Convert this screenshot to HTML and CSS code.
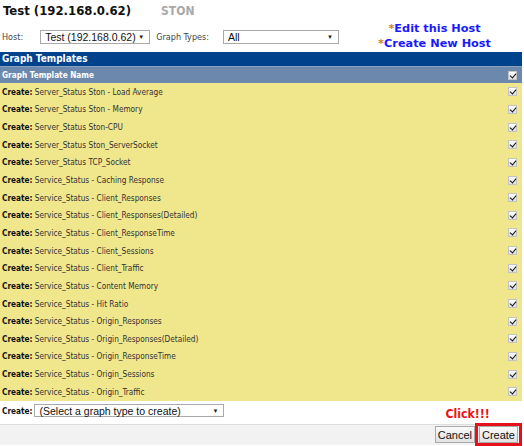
FILE: index.html
```html
<!DOCTYPE html>
<html>
<head>
<meta charset="utf-8">
<link rel="stylesheet" href="styles.css">
</head>
<body>
<div class="top">
  <div class="top-left">
    <div class="title"><span class="host-title">Test (192.168.0.62)</span><span class="ston">STON</span></div>
    <div class="filters">
      <span class="lbl">Host:</span>
      <div class="sel sel-host"><span>Test (192.168.0.62)</span><span class="arr">▼</span></div>
      <span class="lbl lbl-gt">Graph Types:</span>
      <div class="sel sel-gt"><span>All</span><span class="arr">▼</span></div>
    </div>
  </div>
  <div class="links">
    <a class="lnk"><span class="star">*</span>Edit this Host</a>
    <a class="lnk"><span class="star">*</span>Create New Host</a>
  </div>
</div>

<div class="table">
  <div class="thead">Graph Templates</div>
  <div class="subhead"><span>Graph Template Name</span><span class="cb"></span></div>
  <div class="rows" id="rows"></div>
</div>

<div class="create-row">
  <span class="create-lbl">Create:</span>
  <div class="sel sel-create"><span>(Select a graph type to create)</span><span class="arr">▼</span></div>
  <span class="click">Click!!!</span>
</div>

<div class="btnbar">
  <button class="btn">Cancel</button>
  <span class="hl"><button class="btn">Create</button></span>
</div>

<script>
var names = [
 "Server_Status Ston - Load Average",
 "Server_Status Ston - Memory",
 "Server_Status Ston-CPU",
 "Server_Status Ston_ServerSocket",
 "Server_Status TCP_Socket",
 "Service_Status - Caching Response",
 "Service_Status - Client_Responses",
 "Service_Status - Client_Responses(Detailed)",
 "Service_Status - Client_ResponseTime",
 "Service_Status - Client_Sessions",
 "Service_Status - Client_Traffic",
 "Service_Status - Content Memory",
 "Service_Status - Hit Ratio",
 "Service_Status - Origin_Responses",
 "Service_Status - Origin_Responses(Detailed)",
 "Service_Status - Origin_ResponseTime",
 "Service_Status - Origin_Sessions",
 "Service_Status - Origin_Traffic"
];
var rows = document.getElementById('rows');
names.forEach(function(n){
  var r = document.createElement('div');
  r.className = 'row';
  r.innerHTML = '<span><b>Create:</b> ' + n + '</span><span class="cb"></span>';
  rows.appendChild(r);
});
</script>
</body>
</html>
```

FILE: styles.css
```css
* { box-sizing: border-box; }
body {
  margin: 0;
  width: 524px;
  height: 446px;
  overflow: hidden;
  background: #fff;
  font-family: "DejaVu Sans Condensed", "DejaVu Sans", Verdana, sans-serif;
  font-size: 8.2px;
  color: #222;
}
.top {
  display: flex;
  justify-content: space-between;
  height: 52px;
}
.top-left { display: flex; flex-direction: column; }
.title {
  display: flex;
  align-items: baseline;
  padding: 3px 0 0 3px;
  height: 28px;
}
.host-title {
  font-weight: bold;
  font-size: 13px;
  color: #111;
}
.ston {
  font-weight: bold;
  font-size: 12px;
  color: #a8a8a8;
  margin-left: 30px;
}
.filters {
  display: flex;
  align-items: center;
  padding-left: 2px;
  height: 17px;
}
.lbl { color: #444; font-size: 9px; }
.lbl-gt { margin-left: 6px; }
.sel {
  display: flex;
  align-items: center;
  justify-content: space-between;
  height: 14px;
  border: 1px solid #aaa;
  background: #fff;
  font-family: "Liberation Sans", Arial, sans-serif;
  font-size: 10.5px;
  color: #111;
  padding: 0 5px 0 4px;
}
.arr { font-size: 6px; color: #222; }
.sel-host { width: 110px; margin-left: 17px; }
.sel-gt { width: 116px; margin-left: 14px; }
.links {
  display: flex;
  flex-direction: column;
  align-items: center;
  padding: 22px 33px 0 0;
}
.lnk {
  color: #1a1aff;
  font-weight: bold;
  font-size: 11.3px;
  line-height: 14.5px;
  font-family: "DejaVu Sans", Verdana, sans-serif;
}
.star { color: #c8823c; }
.table { width: 522px; }
.thead {
  background: #00438c;
  color: #fff;
  font-weight: bold;
  font-size: 10px;
  height: 14px;
  line-height: 14px;
  padding-left: 2px;
}
.subhead {
  background: #6d88ad;
  color: #fff;
  font-weight: bold;
  font-size: 8.2px;
  height: 17px;
  display: flex;
  align-items: center;
  justify-content: space-between;
  padding: 0 5px 0 2px;
  border-top: 1px solid #8aa0c0;
}
.rows { background: #f0e68c; }
.row {
  height: 17.65px;
  display: flex;
  align-items: center;
  justify-content: space-between;
  padding: 0 5px 0 2px;
  color: #333;
}
.row b { color: #111; }
.cb {
  width: 9px;
  height: 9px;
  border: 1px solid #c4c4c4;
  background: #f4f4f4 linear-gradient(#fff, #dedede);
  position: relative;
}
.cb::after {
  content: "";
  position: absolute;
  left: 2px;
  top: 0px;
  width: 3px;
  height: 5px;
  border: solid #111;
  border-width: 0 1.5px 1.5px 0;
  transform: rotate(40deg);
}
.create-row {
  display: flex;
  align-items: center;
  height: 20px;
  padding-left: 2px;
}
.create-lbl { font-weight: bold; color: #111; }
.sel-create { width: 190px; margin-left: 2px; height: 13px; }
.click {
  color: #ee1111;
  font-weight: bold;
  font-size: 12.2px;
  margin-left: 221px;
  margin-top: 6px;
}
.btnbar {
  margin-top: 3px;
  width: 522px;
  height: 21px;
  background: #f2f2f2;
  border-top: 1px solid #ddd;
  display: flex;
  justify-content: flex-end;
  align-items: center;
}
.btn {
  font-family: "Liberation Sans", Arial, sans-serif;
  font-size: 11px;
  height: 17px;
  padding: 0 2px;
  border: 1px solid #aaa;
  background: linear-gradient(#fafafa, #e2e2e2);
  color: #111;
}
.hl {
  border: 3px solid #e4101c;
  padding: 0 1px;
  margin-left: 0;
  height: 23px;
  display: flex;
  align-items: center;
}
```
